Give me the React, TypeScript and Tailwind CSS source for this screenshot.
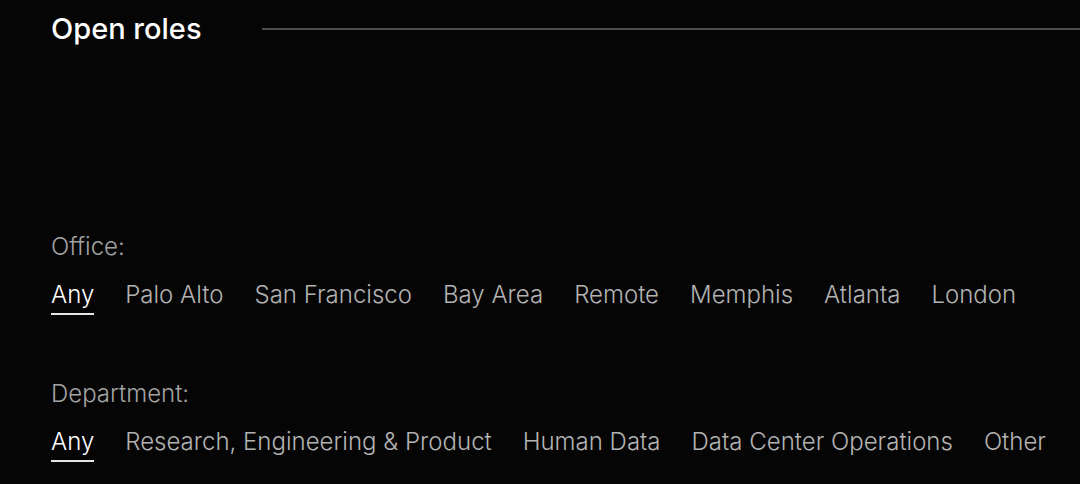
import { useState } from "react";

type FilterProps = { label: string; options: string[] };

function Filter({ label, options }: FilterProps) {
  const [selected, setSelected] = useState(options[0]);
  return (
    <div role="group" aria-label={label}>
      <p className="text-2xl leading-9 text-[#a3a3a3]">{label}:</p>
      <div className="mt-3 flex flex-wrap gap-x-[31px] gap-y-3">
        {options.map((option) => (
          <button
            key={option}
            type="button"
            aria-pressed={option === selected}
            onClick={() => setSelected(option)}
            className={
              option === selected
                ? "cursor-pointer border-b-2 border-[#e5e5e5] text-2xl leading-9 whitespace-nowrap text-white"
                : "cursor-pointer border-b-2 border-transparent text-2xl leading-9 whitespace-nowrap text-[#b3b3b3]"
            }
          >
            {option}
          </button>
        ))}
      </div>
    </div>
  );
}

export default function App() {
  return (
    <main className="min-h-screen bg-[#050505] pl-[51px] font-['Inter','Liberation_Sans',sans-serif] font-light">
      <header className="flex items-center gap-[60px] pt-[11px]">
        <h2 className="text-[29px] leading-9 font-medium text-white">Open roles</h2>
        <div className="h-0.5 flex-1 bg-[#4d4d4d]" />
      </header>
      <div className="flex flex-col gap-[61px] pt-[182px]">
        <Filter
          label="Office"
          options={["Any", "Palo Alto", "San Francisco", "Bay Area", "Remote", "Memphis", "Atlanta", "London"]}
        />
        <Filter
          label="Department"
          options={["Any", "Research, Engineering & Product", "Human Data", "Data Center Operations", "Other"]}
        />
      </div>
    </main>
  );
}
